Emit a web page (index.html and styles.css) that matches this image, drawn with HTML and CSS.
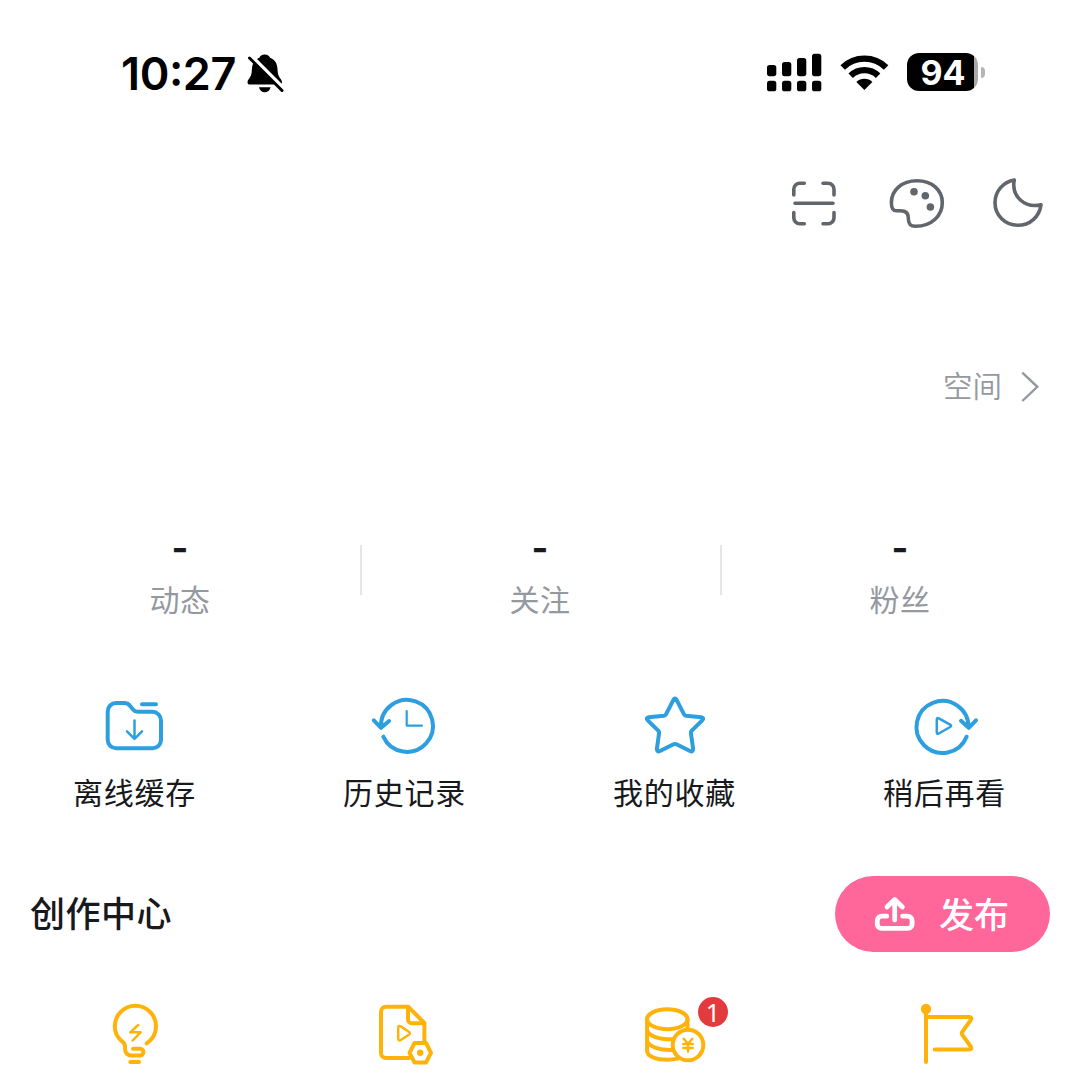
FILE: index.html
```html
<!DOCTYPE html>
<html lang="zh-CN">
<head>
<meta charset="utf-8">
<title>我的</title>
<link rel="stylesheet" href="styles.css">
</head>
<body>
<main class="screen">
  <header class="status">
    <div class="status-left">
      <span class="time">10:27</span>
      <svg class="bell" viewBox="245 50 42 46"><path d="M264.700 54.500c2.800 0 4.800 1.700 5.300 3.200 5 2 7.300 5.800 7.500 11.300.2 5.500 1.300 7.500 3.400 10.300 1.800 2.500 1.300 5.200-1.400 5.200h-29.500c-2.700 0-3.200-2.700-1.500-5 2.400-3.200 3.200-4.500 3.400-10.500.2-5.500 2.700-9.300 7.500-11.300.5-1.500 2.500-3.200 5.300-3.200zM259 87.300h11.600c-.8 3.300-3 5-5.800 5s-5-1.700-5.800-5z"/><path class="bell-gap" d="M250 55.500l34 34"/><path class="bell-slash" d="M249.500 58l32.500 32.500"/></svg>
    </div>
    <div class="status-right">
      <svg class="signal" viewBox="766 52 56 41"><rect x="767" y="65" width="9.300" height="11.200" rx="2.600"/><rect x="782" y="62" width="9.300" height="14.200" rx="2.600"/><rect x="797" y="58" width="9.300" height="18.200" rx="2.600"/><rect x="812" y="53.700" width="9.300" height="22.500" rx="2.600"/><rect x="767" y="80.700" width="9.300" height="10.600" rx="2.600"/><rect x="782" y="80.700" width="9.300" height="10.600" rx="2.600"/><rect x="797" y="80.700" width="9.300" height="10.600" rx="2.600"/><rect x="812" y="80.700" width="9.300" height="10.600" rx="2.600"/></svg>
      <svg class="wifi" viewBox="840 52 50 41"><g class="wifi-arcs"><path d="M842.700 67.500a31 31 0 0 1 43.400 0"/><path d="M850.700 75.700a19.700 19.700 0 0 1 27.400 0"/></g><path d="M856.400 82a11.400 11.400 0 0 1 16 0l-8 7.900z"/></svg>
      <div class="battery"><span class="level">94</span><span class="nub"></span></div>
    </div>
  </header>

  <nav class="tools">
    <svg class="tool" viewBox="784 173 60 60"><path d="M804.300 183.300h-4.500a6 6 0 0 0-6 6v5.700M823 183.300h5a6 6 0 0 1 6 6v5.700M793.800 212.500v5.200a6 6 0 0 0 6 6h4.500M834 212.500v5.200a6 6 0 0 1-6 6h-5M795 203.300h38"/></svg>
    <svg class="tool" viewBox="886 173 60 60"><path d="M917 180.800C901.500 180.800 891.400 190.500 891.400 202.500C891.400 208 892.500 210.800 896.500 210.800C900.500 210.800 908.300 209.500 908.300 218C908.300 224 910 226.300 915.500 226.300C932 226.300 942.300 215.500 942.300 202.500C942.300 190.500 932.500 180.800 917 180.800Z"/><g class="dots"><circle cx="914" cy="191.800" r="3.800"/><circle cx="925.300" cy="195.800" r="3.800"/><circle cx="930.400" cy="207" r="3.800"/></g></svg>
    <svg class="tool" viewBox="988 173 60 60"><path d="M1014.300 180C1003.500 181.800 995 191 995 202.800C995 215.500 1005.200 225.300 1017.700 225.300C1029.800 225.300 1039.500 216.800 1041 204.700C1025 208.500 1011 196.500 1014.300 180Z"/></svg>
  </nav>

  <a class="space"><span>空间</span><svg class="chevron" viewBox="1020 370 20 34"><path d="M1022.300 372.700l15 14.100-15 14.200"/></svg></a>

  <section class="stats">
    <div class="stat"><b>-</b><span>动态</span></div>
    <div class="stat"><b>-</b><span>关注</span></div>
    <div class="stat"><b>-</b><span>粉丝</span></div>
  </section>

  <section class="shortcuts">
    <div class="shortcut">
      <svg viewBox="100 690 70 70"><path d="M116 703.100h8.500c2.500 0 3.800.8 5.400 2.600l3.200 3.900c1.500 1.700 2.700 2.200 5 2.200H152.500a8.500 8.500 0 0 1 8.500 8.500V740a8.300 8.300 0 0 1-8.300 8.200H116a8.300 8.300 0 0 1-8.300-8.200V711.400a8.300 8.300 0 0 1 8.300-8.300zM142 704.200h14"/><path class="fine" d="M134.500 720.500v18M127 731.300l7.500 7.500 7.500-7.500"/></svg>
      <span>离线缓存</span>
    </div>
    <div class="shortcut">
      <svg viewBox="370 690 70 70"><path d="M383.300 736.700A26 26 0 1 0 381 727.500M373.800 720.300l7.300 7.500 8-6.800"/><path class="thin" d="M406.700 711v14.600H422"/></svg>
      <span>历史记录</span>
    </div>
    <div class="shortcut">
      <svg viewBox="640 690 70 70"><path d="M673.400 699.800Q675 697.200 676.600 699.800L684 714.300Q684.500 715.500 686 715.700L701.300 717.200Q704.500 717.800 702.200 720.300L691.800 730.600Q690.700 731.600 690.900 733L693.100 748.800Q693.200 752.400 690 751L677 744.500Q675 743.600 673 744.500L660 751Q656.800 752.400 656.900 748.800L659.100 733Q659.300 731.600 658.200 730.600L647.800 720.300Q645.500 717.800 648.700 717.200L664 715.700Q665.500 715.500 666 714.300Z"/></svg>
      <span>我的收藏</span>
    </div>
    <div class="shortcut">
      <svg viewBox="910 690 70 70"><path d="M966.600 736.700A26 26 0 1 1 968.500 727.500M961 720.800l7.700 7 7.300-7.500"/><path class="fine" d="M936.800 719.500q0-2.200 2-1.100l11.300 6.200q1.900 1.200 0 2.400l-11.300 6.500q-2 1.100-2-1.100z"/></svg>
      <span>稍后再看</span>
    </div>
  </section>

  <section class="creator">
    <h2>创作中心</h2>
    <button class="publish"><svg viewBox="874 893 42 42"><path d="M886.800 916.200h-5a4.500 4.500 0 0 0-4.500 4.500v3.500a4.200 4.200 0 0 0 4.200 4.200h26.400a4.200 4.200 0 0 0 4.200-4.200v-3.500a4.500 4.500 0 0 0-4.500-4.500h-5M894.700 920v-20M887 907l7.700-7.500 7.700 7.500"/></svg><span>发布</span></button>
  </section>

  <section class="creator-tools">
    <div class="item"><svg viewBox="95 990 80 80"><path d="M146.700 1043.300C152.500 1039.500 156 1033.500 156 1026.300A20.600 20.600 0 1 0 114.800 1026.300C114.800 1032.500 117.300 1037.500 121.800 1041.200Q125 1043.500 125 1046.500V1048.500Q125 1055.500 132 1055.500H140A3.400 3.400 0 0 0 140 1048.700H133M130.300 1062h8.700"/><path class="fine" d="M138.300 1025l-8 7.300h10.300l-8 8.200"/></svg></div>
    <div class="item"><svg viewBox="365 990 80 80"><path d="M409 1058H386a5 5 0 0 1-5-5V1011.700a5 5 0 0 1 5-5H408.200L424.400 1023V1041M408 1007.500V1019.500a3.700 3.700 0 0 0 3.700 3.700H424M414.500 1043h11.500l5 9.800-5 9.700h-11.500l-5-9.700z"/><circle class="solid" cx="420.200" cy="1052.800" r="3.200"/><path class="fine" d="M398.200 1028q0-3 2.600-1.600l8 5.300q2.200 1.500 0 3l-8 5.300q-2.600 1.400-2.600-1.600z"/></svg></div>
    <div class="item"><svg viewBox="635 990 80 80"><ellipse cx="667.300" cy="1019.200" rx="20.200" ry="10"/><path d="M647.100 1019.200V1050.500C647.100 1056.500 656 1059.700 667.500 1059.700Q673 1059.700 678 1058.600M687.500 1019.200V1029M647.100 1030C648.500 1036 659 1039.800 673.500 1039.300M647.100 1040.800C648.500 1046.500 659 1050.200 671.500 1050"/><circle cx="688" cy="1045" r="15.300"/><path class="fine" d="M683.700 1038.800l4.300 5 4.300-5M688 1044v7.500M683.300 1044.100h9.400M683.300 1048h9.400"/></svg><span class="badge">1</span></div>
    <div class="item"><svg viewBox="905 990 80 80"><circle class="solid" cx="926" cy="1009" r="5.200"/><path d="M926 1009v53M926 1017.100h44q2.300.5.700 2.900L962.300 1031.800q-1 1.500 0 3L970.700 1046.500q1.500 2.700-1 3.100H934.700"/></svg></div>
  </section>
</main>
</body>
</html>
```
FILE: styles.css
```css
* { box-sizing: border-box; }
body {
  margin: 0;
  background: #fff;
  color: #18191c;
  font-family: Inter, "Noto Sans CJK SC", sans-serif;
}
.screen {
  width: 1080px;
  height: 1080px;
  overflow: hidden;
  display: flex;
  flex-direction: column;
}
svg { display: block; flex: none; }
.status {
  height: 146px;
  padding: 0 94px 0 121px;
  display: flex;
  justify-content: space-between;
  color: #000;
}
.status-left { display: flex; align-items: center; height: 146px; gap: 9px; }
.status-right { display: flex; align-items: center; height: 144px; margin-right: 1px; }
.time {
  width: 115px;
  padding-top: 2px;
  font-size: 45px;
  font-weight: 600;
  line-height: 54px;
  letter-spacing: -0.4px;
  font-feature-settings: "case";
  white-space: nowrap;
}
.bell { width: 42px; height: 46px; }
.bell-gap { stroke: #fff; stroke-width: 5; }
.bell-slash { stroke: #000; stroke-width: 3; stroke-linecap: round; }
.signal { width: 56px; height: 41px; margin-right: 18px; }
.wifi { width: 50px; height: 41px; margin-right: 17px; }
.wifi-arcs { fill: none; stroke: #000; stroke-width: 6.4; }
.battery { display: flex; align-items: center; gap: 3px; height: 38px; }
.level {
  width: 71px;
  height: 38px;
  padding-left: 1px;
  border-radius: 12px;
  background: linear-gradient(90deg, #000 67px, #a9a9a9 67px);
  color: #fff;
  font-size: 34px;
  font-weight: 700;
  line-height: 39px;
  text-align: center;
}
.nub { width: 4px; height: 11px; border-radius: 0 5px 5px 0; background: #b5b5b5; }
.tools {
  height: 114px;
  padding: 27px 32px 0;
  display: flex;
  justify-content: flex-end;
  gap: 42px;
}
.tool { width: 60px; height: 60px; fill: none; stroke: #61666d; stroke-width: 3.6; stroke-linecap: round; stroke-linejoin: round; }
.dots { fill: #61666d; stroke: none; }
.space {
  height: 254px;
  padding: 110px 40px 0 0;
  display: flex;
  justify-content: flex-end;
  gap: 18px;
  color: #9499a0;
  font-size: 29.5px;
  font-weight: 350;
  line-height: 33px;
}
.chevron { width: 20px; height: 34px; fill: none; stroke: #9499a0; stroke-width: 2.4; }
.stats { height: 176px; display: grid; grid-template-columns: repeat(3, 1fr); padding-top: 17px; }
.stat { display: flex; flex-direction: column; align-items: center; }
.stat + .stat { background: linear-gradient(#e3e5e7, #e3e5e7) no-repeat 0 14px / 2px 50px; }
.stat b { font-size: 36px; font-weight: 700; line-height: 34px; }
.stat span { margin-top: 13px; color: #9499a0; font-size: 30px; line-height: 44px; letter-spacing: .6px; }
.shortcuts { height: 186px; display: grid; grid-template-columns: repeat(4, 1fr); }
.shortcut { display: flex; flex-direction: column; align-items: center; }
.shortcut svg { width: 70px; height: 70px; fill: none; stroke: #2d9fde; stroke-width: 4; stroke-linecap: round; stroke-linejoin: round; }
.shortcut .fine { stroke-width: 2.5; }
.shortcut .thin { stroke-width: 2.2; }
.shortcut span { margin-top: 11px; padding-right: 1px; font-size: 30px; line-height: 44px; letter-spacing: .8px; }
.creator { height: 76px; padding: 0 30px; display: flex; align-items: center; justify-content: space-between; }
.creator h2 { margin: 0; font-size: 35px; font-weight: 500; line-height: 50px; letter-spacing: .5px; }
.publish {
  width: 215px;
  height: 76px;
  padding: 0 0 0 39px;
  border: 0;
  border-radius: 38px;
  background: #ff6699;
  color: #fff;
  display: flex;
  align-items: center;
  gap: 23px;
  font: 500 35px/50px "Noto Sans CJK SC", sans-serif;
}
.publish span { padding-bottom: 2px; }
.publish svg { width: 42px; height: 42px; fill: none; stroke: #fff; stroke-width: 4.8; stroke-linecap: round; stroke-linejoin: round; }
.creator-tools { height: 128px; padding-top: 38px; display: grid; grid-template-columns: repeat(4, 1fr); }
.item { position: relative; display: flex; justify-content: center; align-items: flex-start; }
.item svg { width: 80px; height: 80px; fill: none; stroke: #ffb30a; stroke-width: 4; stroke-linecap: round; stroke-linejoin: round; }
.item .fine { stroke-width: 2.5; }
.item .solid { fill: #ffb30a; stroke: none; }
.badge {
  position: absolute;
  left: 158px;
  top: 7px;
  width: 30px;
  height: 30px;
  border-radius: 50%;
  background: #e33b3d;
  color: #fff;
  font: 400 25px/30px "Noto Sans", sans-serif;
  text-align: center;
}
```
